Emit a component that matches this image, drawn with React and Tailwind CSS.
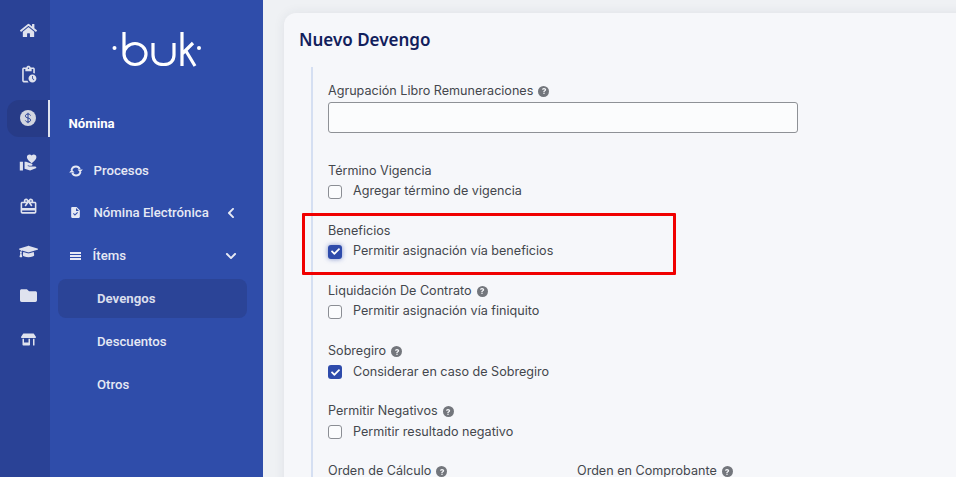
import React from 'react';
import { FaHome, FaGraduationCap, FaFolder, FaStoreAlt, FaChevronLeft, FaChevronDown, FaCheck, FaQuestion } from 'react-icons/fa';
import { MdPendingActions, MdVolunteerActivism, MdRedeem, MdTask } from 'react-icons/md';

function DollarIcon() {
    return (
        <svg width="16" height="16" viewBox="0 0 16 16" fill="none">
            <circle cx="8" cy="8" r="8" fill="#d3d6e0" />
            <path d="M10.500 5.500c-.4-1-1.300-1.500-2.500-1.500-1.500 0-2.600.8-2.600 2 0 2.800 5.200 1.200 5.200 4 0 1.200-1.100 2-2.600 2-1.200 0-2.100-.5-2.600-1.500M8 2.800v10.400" stroke="#2a4296" strokeWidth="1" />
        </svg>
    );
}

function SyncIcon() {
    return (
        <svg width="14" height="12" viewBox="0 0 14 12" fill="none" stroke="currentColor" strokeWidth="2" className="block">
            <path d="M2.500 5c.6-2.200 2.400-3.500 4.500-3.500 1.800 0 3 .9 3.800 2.500" />
            <path d="M11.500 7c-.6 2.200-2.400 3.500-4.500 3.500-1.800 0-3-.9-3.800-2.500" />
            <path d="M8.500 4.600h5.300l-2.600 2.800zM5.500 7.400H.2l2.600-2.800z" fill="currentColor" stroke="none" />
        </svg>
    );
}

function ListIcon() {
    return (
        <svg width="11" height="8" viewBox="0 0 11 8" fill="currentColor" className="block">
            <rect y="0" width="11" height="2" />
            <rect y="3" width="11" height="2" />
            <rect y="6" width="11" height="2" />
        </svg>
    );
}

const railItems = [
    { icon: <FaHome size={17} /> },
    { icon: <MdPendingActions size={19} /> },
    { icon: <DollarIcon />, active: true },
    { icon: <MdVolunteerActivism size={19} /> },
    { icon: <MdRedeem size={19} /> },
    { icon: <FaGraduationCap size={19} /> },
    { icon: <FaFolder size={17} /> },
    { icon: <FaStoreAlt size={15} /> },
];

function Logo() {
    return (
        <svg width="90" height="36" viewBox="0 0 90 36" fill="none" stroke="white" strokeWidth="3.2" className="block">
            <circle cx="2.500" cy="17" r="2" fill="white" stroke="none" />
            <path d="M12 1v22a11 10.500 0 0 0 22 0a11 10.500 0 0 0-22 0" />
            <path d="M41 12v12c0 6 4 9.500 10.500 9.500S62 30 62 24V12" />
            <path d="M70 1v34M70 23L81 12M74 20L83 35" />
            <circle cx="87" cy="17" r="2" fill="white" stroke="none" />
        </svg>
    );
}

function Help() {
    return (
        <span className="inline-flex w-[11px] h-[11px] rounded-full bg-[#73767c] text-[#f6f7fa] items-center justify-center ml-[5px]">
            <FaQuestion size={6} />
        </span>
    );
}

function Check({ checked, focused, label }) {
    return (
        <div className="flex items-center h-[21px]">
            {checked ? (
                <span className={`w-[14px] h-[14px] rounded-[3px] bg-[#2e4bab] text-white flex items-center justify-center ${focused ? 'shadow-[0_0_5px_rgba(46,75,171,0.6)]' : ''}`}>
                    <FaCheck size={9} />
                </span>
            ) : (
                <span className="w-[14px] h-[14px] rounded-[3px] border border-[#8b8e94] bg-[#fbfcfd]" />
            )}
            <span className="ml-[11px]">{label}</span>
        </div>
    );
}

function Field({ title, help, checked, focused, label }) {
    return (
        <div className="mb-[19.2px]">
            <div className="flex items-center h-5">{title}{help && <Help />}</div>
            <Check checked={checked} focused={focused} label={label} />
        </div>
    );
}

export default function App() {
    return (
        <div className="flex h-[477px] w-[956px] overflow-hidden bg-[#eff1f4] font-['Roboto',sans-serif]">
            <div className="w-[50px] shrink-0 bg-[#2a4296] pt-2 pl-[7px] flex flex-col text-[#dfe2ee]">
                {railItems.map((item, i) => (
                    <div key={i} className="h-[44.2px] flex items-center">
                        <div className={`w-[43px] h-[37px] flex items-center justify-center rounded-l-xl ${item.active ? 'bg-[#273b87] border-r-2 border-[#dfe3ee]' : ''}`}>
                            {item.icon}
                        </div>
                    </div>
                ))}
            </div>

            <div className="w-[213px] shrink-0 bg-[#2f4daa] text-[#e6e9f4] text-[13.2px] font-medium">
                <div className="pt-[31px] pl-[62px]"><Logo /></div>
                <div className="pl-[18.500px] mt-[47px] h-5 flex items-center font-bold text-white">Nómina</div>
                <div className="mt-[27px] pl-[19px] pr-[26px] h-5 flex items-center">
                    <SyncIcon />
                    <span className="ml-[10.500px]">Procesos</span>
                </div>
                <div className="mt-[22px] pl-[19px] pr-[26px] h-5 flex items-center justify-between">
                    <div className="flex items-center">
                        <MdTask size={15} className="w-[13px]" />
                        <span className="ml-[11.500px]">Nómina Electrónica</span>
                    </div>
                    <FaChevronLeft size={12} />
                </div>
                <div className="mt-[23px] pl-[19px] pr-[26px] h-5 flex items-center justify-between">
                    <div className="flex items-center">
                        <span className="ml-px"><ListIcon /></span>
                        <span className="ml-[11.500px]">Ítems</span>
                    </div>
                    <FaChevronDown size={12} />
                </div>
                <div className="mt-[13px] ml-2 w-[189px] h-[39px] rounded-lg bg-[#2b4497] flex items-center pl-[39px] font-bold text-[#d9ddec]">Devengos</div>
                <div className="mt-1 ml-2 h-[39px] flex items-center pl-[39px]">Descuentos</div>
                <div className="mt-1 ml-2 h-[39px] flex items-center pl-[39px]">Otros</div>
            </div>

            <div className="flex-1 pl-[21px] pt-[13px]">
                <div className="h-[500px] w-[700px] rounded-tl-xl bg-[#f6f7fa] shadow-[0_0_12px_rgba(40,50,80,0.08)] pl-[15px] pt-[14px]">
                    <h1 className="font-['Noto_Sans',sans-serif] text-[17px] leading-[26px] font-semibold text-[#11205c]">Nuevo Devengo</h1>
                    <div className="mt-[14px] ml-3 border-l-[2px] border-[#d5dff2] pl-[15px] pt-[14px] font-['Inter',sans-serif] text-[12.6px] text-[#44474d]">
                        <div className="flex items-center h-5">Agrupación Libro Remuneraciones<Help /></div>
                        <div className="mt-[1px] w-[470px] h-[31px] rounded-[3px] border border-[#8e9196] bg-[#fbfcfd]" />
                        <div className="mt-[28px]" />
                        <Field title="Término Vigencia" label="Agregar término de vigencia" />
                        <div className="relative">
                            <Field title="Beneficios" checked focused label="Permitir asignación vía beneficios" />
                            <div className="absolute left-[-26px] top-[-8.200px] w-[374px] h-[62px] border-[3px] border-[#f00000] rounded-[1px]" />
                        </div>
                        <Field title="Liquidación De Contrato" help label="Permitir asignación vía finiquito" />
                        <Field title="Sobregiro" help checked label="Considerar en caso de Sobregiro" />
                        <Field title="Permitir Negativos" help label="Permitir resultado negativo" />
                        <div className="flex h-5">
                            <div className="w-[249px] flex items-center">Orden de Cálculo<Help /></div>
                            <div className="flex items-center">Orden en Comprobante<Help /></div>
                        </div>
                    </div>
                </div>
            </div>
        </div>
    );
}
